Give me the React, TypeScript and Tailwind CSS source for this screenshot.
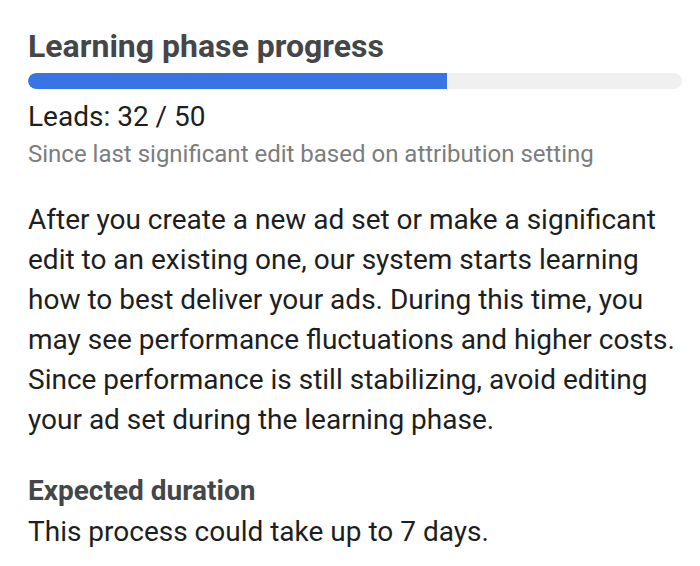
export default function App() {
  const leads = 32;
  const target = 50;
  const pct = (leads / target) * 100;

  return (
    <div className="min-h-screen bg-white font-['Roboto',_'Liberation_Sans',_sans-serif]">
      <div className="w-[654px] ml-[28px] pt-[28px]">
        <h1 className="text-[32px] leading-[36px] font-bold text-[#444648]">Learning phase progress</h1>

        <div className="mt-[9px] h-[16px] w-full rounded-full bg-[#f0f0f0] overflow-hidden">
          <div className="h-full rounded-l-full bg-[#3874e4]" style={{ width: `${pct}%` }} />
        </div>

        <p className="mt-[11px] text-[28px] leading-[34px] text-[#1c1e21]">
          Leads: {leads} / {target}
        </p>
        <p className="mt-[5px] text-[24px] leading-[30px] text-[#7b7d80]">
          Since last significant edit based on attribution setting
        </p>

        <p className="mt-[31px] text-[28px] leading-[40px] text-[#1c1e21]">
          After you create a new ad set or make a significant edit to an existing one, our system starts learning how
          to best deliver your ads. During this time, you may see performance fluctuations and higher costs. Since
          performance is still stabilizing, avoid editing your ad set during the learning phase.
        </p>

        <h2 className="mt-[34px] text-[28px] leading-[34px] font-bold text-[#444648]">Expected duration</h2>
        <p className="mt-[7px] text-[28px] leading-[34px] text-[#1c1e21]">This process could take up to 7 days.</p>
      </div>
    </div>
  );
}
